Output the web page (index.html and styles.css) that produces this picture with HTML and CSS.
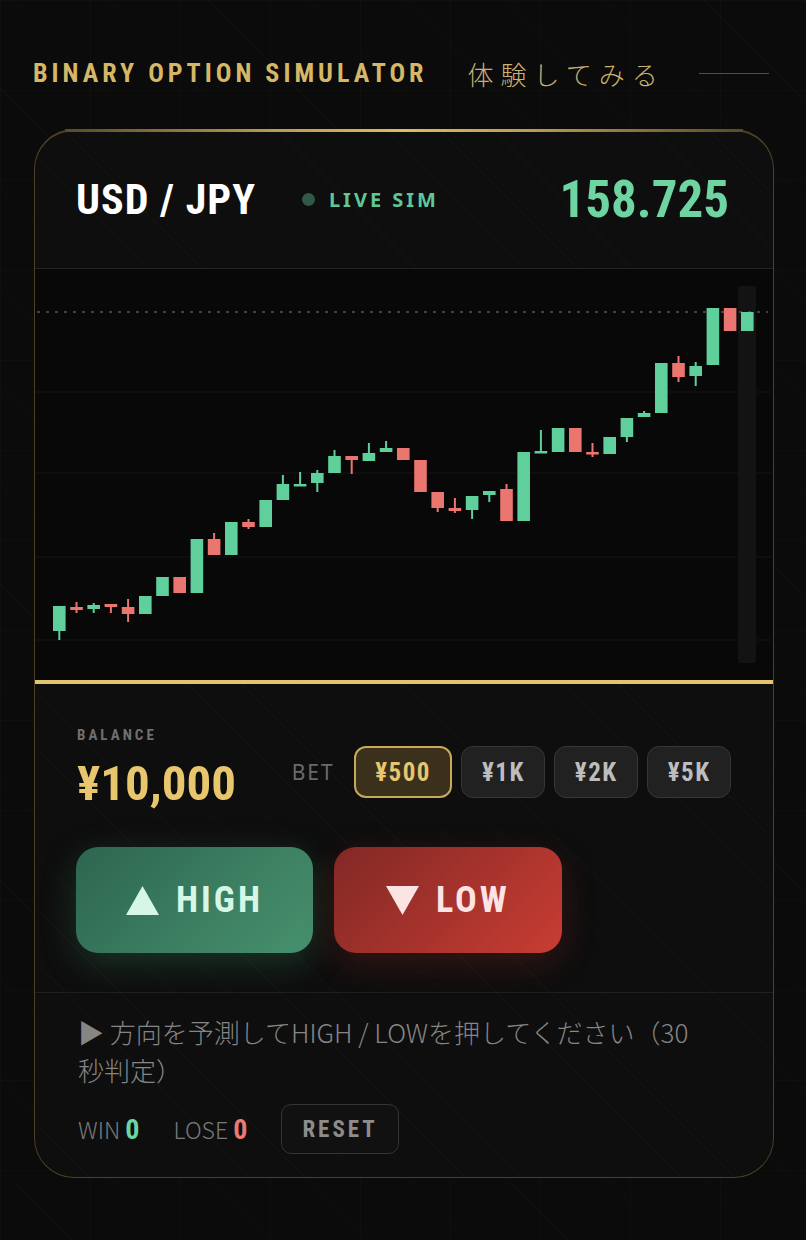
FILE: index.html
```html
<!DOCTYPE html>
<html lang="ja">
<head>
    <meta charset="UTF-8">
    <meta name="viewport" content="width=device-width, initial-scale=1.0">
    <title>Binary Option Simulator</title>
    <link rel="stylesheet" href="styles.css">
</head>
<body>
    <div class="page">
        <header class="intro">
            <span class="intro-en">BINARY OPTION SIMULATOR</span>
            <span class="intro-ja">体験してみる</span>
            <span class="intro-line"></span>
        </header>

        <section class="sim">
            <div class="sim-head">
                <div class="pair">USD / JPY</div>
                <div class="live"><span class="live-dot"></span>LIVE SIM</div>
                <div class="price" id="price">158.725</div>
            </div>

            <div class="chart">
                <svg id="chart" width="736" height="411" viewBox="35 269 736 411"></svg>
            </div>

            <div class="trade">
                <div class="trade-top">
                    <div class="balance">
                        <div class="balance-label">BALANCE</div>
                        <div class="balance-amount">¥10,000</div>
                    </div>
                    <div class="bet">
                        <span class="bet-label">BET</span>
                        <button class="chip active">¥500</button>
                        <button class="chip">¥1K</button>
                        <button class="chip">¥2K</button>
                        <button class="chip">¥5K</button>
                    </div>
                </div>
                <div class="actions">
                    <button class="btn btn-high">
                        <svg width="33" height="29" viewBox="0 0 33 29"><polygon points="16.5,0 33,29 0,29" fill="#d6f6e6"/></svg>
                        <span>HIGH</span>
                    </button>
                    <button class="btn btn-low">
                        <svg width="33" height="29" viewBox="0 0 33 29"><polygon points="0,0 33,0 16.5,29" fill="#fde4e4"/></svg>
                        <span>LOW</span>
                    </button>
                </div>
            </div>

            <div class="status">
                <p class="msg">▶ 方向を予測してHIGH / LOWを押してください（30秒判定）</p>
                <div class="score">
                    <span class="score-item">WIN <b class="win">0</b></span>
                    <span class="score-item">LOSE <b class="lose">0</b></span>
                    <button class="reset">RESET</button>
                </div>
            </div>
        </section>
    </div>

    <script>
        // [bodyTop, bodyBottom, wickTop, wickBottom, up]
        const candles = [
            [606, 631, 606, 640, 1], [607, 610, 602, 613, 0], [605, 609, 603, 613, 1], [604, 607, 604, 613, 0],
            [607, 614, 599, 622, 0], [596, 614, 596, 614, 1], [577, 596, 577, 596, 1], [577, 593, 577, 593, 0],
            [539, 593, 539, 593, 1], [539, 555, 533, 555, 0], [522, 555, 522, 555, 1], [522, 527, 519, 529, 0],
            [500, 527, 500, 527, 1], [484, 500, 475, 500, 1], [484, 486, 472, 486, 1], [473, 483, 470, 492, 1],
            [456, 473, 450, 473, 1], [456, 460, 456, 474, 0], [453, 461, 443, 461, 1], [448, 452, 441, 452, 1],
            [448, 460, 448, 460, 0], [460, 492, 460, 492, 0], [492, 508, 492, 512, 0], [508, 511, 498, 513, 0],
            [496, 510, 496, 519, 1], [491, 495, 491, 502, 1], [489, 521, 484, 521, 0], [452, 521, 452, 521, 1],
            [451, 453, 430, 453, 1], [428, 452, 428, 452, 1], [428, 452, 428, 452, 0], [452, 454, 443, 457, 0],
            [437, 454, 437, 454, 1], [418, 437, 418, 442, 1], [413, 417, 411, 417, 1], [363, 413, 363, 413, 1],
            [363, 377, 356, 382, 0], [366, 376, 362, 386, 1], [308, 365, 308, 365, 1], [308, 331, 308, 331, 0],
            [312, 331, 312, 331, 1]
        ];

        function drawChart() {
            const svg = document.getElementById("chart");
            let out = "";
            [392, 473, 557, 640].forEach(y => {
                out += `<line x1="35" x2="771" y1="${y}" y2="${y}" stroke="#141414" stroke-width="1"/>`;
            });
            out += `<rect x="738" y="286" width="18" height="377" rx="3" fill="#131313"/>`;
            out += `<line x1="37" x2="768" y1="312" y2="312" stroke="#555555" stroke-width="1.5" stroke-dasharray="3 6"/>`;
            candles.forEach((c, i) => {
                const x = 53 + i * 17.2;
                const color = c[4] ? "#5fd09c" : "#ea766f";
                const h = Math.max(c[1] - c[0], 2.5);
                out += `<rect x="${x + 5.3}" y="${c[2]}" width="2" height="${c[3] - c[2]}" fill="${color}"/>`;
                out += `<rect x="${x}" y="${c[0]}" width="12.6" height="${h}" fill="${color}"/>`;
            });
            svg.innerHTML = out;
        }

        drawChart();
    </script>
</body>
</html>
```

FILE: styles.css
```css
body {
    margin: 0;
    background-color: #0b0b0b;
    background-image:
        repeating-linear-gradient(45deg, rgba(255, 255, 255, 0.012) 0 1px, transparent 1px 70px),
        linear-gradient(rgba(255, 255, 255, 0.015) 1px, transparent 1px),
        linear-gradient(90deg, rgba(255, 255, 255, 0.015) 1px, transparent 1px);
    background-size: auto, 90px 90px, 90px 90px;
    font-family: "Noto Sans CJK JP", "Noto Sans", sans-serif;
    color: #cccccc;
}
.page {
    padding: 56px 0 0 34px;
}
.intro {
    display: flex;
    align-items: center;
    height: 34px;
    margin-left: -1px;
    white-space: nowrap;
}
.intro-en {
    font-family: "Roboto", sans-serif;
    font-stretch: 75%;
    font-weight: 700;
    font-size: 26px;
    letter-spacing: 4px;
    color: #d5b767;
}
.intro-ja {
    margin-left: 40px;
    font-size: 26px;
    font-weight: 300;
    letter-spacing: 7px;
    color: #cbb070;
}
.intro-line {
    margin-left: 34px;
    width: 70px;
    height: 1px;
    background: #5a4c2c;
}
.sim {
    position: relative;
    width: 740px;
    box-sizing: border-box;
    margin-top: 39px;
    border: 1.5px solid #4d4026;
    border-top-width: 2px;
    border-radius: 40px;
    background-color: #0e0e0e;
    background-image: repeating-linear-gradient(45deg, rgba(255, 255, 255, 0.014) 0 1px, transparent 1px 38px);
}
.sim::before {
    content: "";
    position: absolute;
    top: -2px;
    left: 30px;
    right: 30px;
    height: 2.5px;
    background: linear-gradient(90deg, #5a4a28, #b89a4e 30%, #dcbd64 50%, #b89a4e 70%, #5a4a28);
}
.sim-head {
    display: flex;
    align-items: center;
    height: 137px;
    padding: 0 44px 0 41px;
    border-bottom: 1px solid #232323;
    white-space: nowrap;
}
.pair {
    font-family: "Roboto", sans-serif;
    font-stretch: 75%;
    font-weight: 700;
    font-size: 42px;
    letter-spacing: 1px;
    color: #ffffff;
}
.live {
    display: flex;
    align-items: center;
    margin-left: 46px;
    font-family: "Noto Sans", sans-serif;
    font-weight: 700;
    font-size: 20px;
    letter-spacing: 3px;
    color: #5fc796;
}
.live-dot {
    width: 13px;
    height: 13px;
    border-radius: 50%;
    background: #2f5a47;
    margin-right: 14px;
}
.price {
    margin-left: auto;
    font-family: "Roboto", sans-serif;
    font-stretch: 75%;
    font-weight: 700;
    font-size: 51px;
    color: #6dd4a2;
}
.chart {
    height: 411px;
    background: #080808;
    border-bottom: 4px solid #e3c46c;
}
.chart svg {
    display: block;
}
.trade {
    padding: 41px 42px 39px 41px;
    border-bottom: 1px solid #1f1f1f;
}
.trade-top {
    display: flex;
    justify-content: space-between;
    align-items: center;
    white-space: nowrap;
}
.balance {
    padding-left: 1px;
}
.balance-label {
    font-family: "Roboto", sans-serif;
    font-stretch: 75%;
    font-weight: 700;
    font-size: 15px;
    line-height: 20px;
    letter-spacing: 3px;
    color: #6f6f6f;
}
.balance-amount {
    margin-top: 11px;
    font-family: "Roboto", sans-serif;
    font-stretch: 75%;
    font-weight: 700;
    font-size: 49px;
    line-height: 56px;
    color: #e8c66e;
}
.bet {
    display: flex;
    align-items: center;
    gap: 9px;
    padding-top: 7px;
}
.bet-label {
    margin-right: 10px;
    font-family: "Noto Sans", sans-serif;
    font-size: 21px;
    letter-spacing: 2px;
    color: #6a6a6a;
}
.chip {
    height: 52px;
    padding: 0 19.5px;
    border: 1.5px solid #363636;
    border-radius: 12px;
    background: #212121;
    font-family: "Roboto", sans-serif;
    font-stretch: 75%;
    font-weight: 700;
    font-size: 25px;
    letter-spacing: 1.5px;
    color: #bdbdbd;
    cursor: pointer;
}
.chip.active {
    border: 2px solid #c8a95c;
    background: #3a301b;
    color: #e8c66e;
}
.actions {
    display: flex;
    gap: 21px;
    margin-top: 35px;
}
.btn {
    display: flex;
    align-items: center;
    gap: 17px;
    height: 106px;
    padding: 0 50px;
    border: none;
    border-radius: 22px;
    font-family: "Roboto", sans-serif;
    font-stretch: 75%;
    font-weight: 700;
    font-size: 36px;
    letter-spacing: 3px;
    cursor: pointer;
}
.btn-high {
    background: linear-gradient(135deg, #2d6650, #47916e);
    color: #d6f6e6;
    box-shadow: 0 10px 34px rgba(60, 150, 105, 0.28);
}
.btn-low {
    padding: 0 52px;
    background: linear-gradient(135deg, #822825, #c83d33);
    color: #fde4e4;
    box-shadow: 0 10px 34px rgba(190, 50, 40, 0.22);
}
.status {
    padding: 20px 42px 23px 43px;
}
.msg {
    margin: 0;
    max-width: 625px;
    font-size: 26px;
    line-height: 37.5px;
    font-weight: 300;
    color: #858585;
}
.score {
    display: flex;
    align-items: center;
    gap: 34px;
    margin-top: 16px;
}
.score-item {
    font-size: 23px;
    font-weight: 300;
    color: #7a7a7a;
}
.score-item b {
    font-family: "Roboto", sans-serif;
    font-stretch: 75%;
    font-weight: 700;
    font-size: 28px;
}
.win {
    color: #6dd4a2;
}
.lose {
    color: #ea7a74;
}
.reset {
    height: 50px;
    padding: 0 20px;
    border: 1.5px solid #343434;
    border-radius: 10px;
    background: #111111;
    font-family: "Roboto", sans-serif;
    font-stretch: 75%;
    font-weight: 700;
    font-size: 23px;
    letter-spacing: 3px;
    color: #8c8c8c;
    cursor: pointer;
}
```
